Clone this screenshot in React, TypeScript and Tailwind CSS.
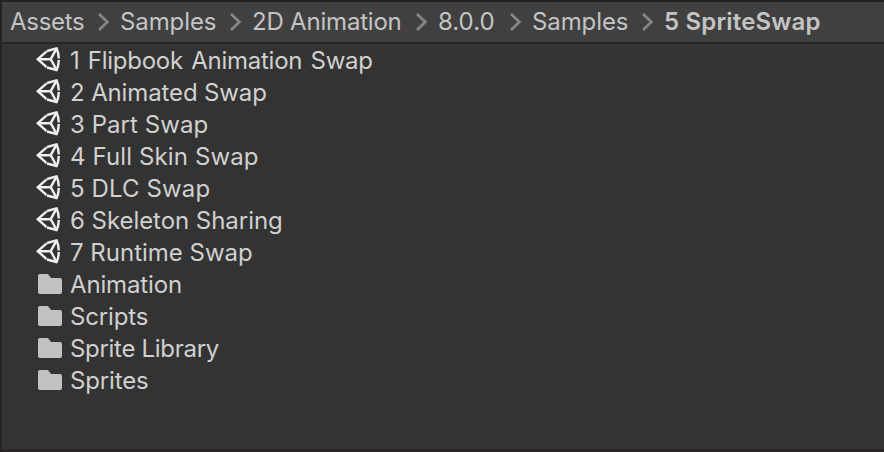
const crumbs = [
  { label: "Assets", width: "w-[110px]", tracking: "tracking-[-0.3px]" },
  { label: "Samples", width: "w-[132px]", tracking: "tracking-[-0.1px]" },
  { label: "2D Animation", width: "w-[186px]", tracking: "tracking-[-0.2px]" },
  { label: "8.0.0", width: "w-[94px]", tracking: "tracking-normal" },
  { label: "Samples", width: "w-[132px]", tracking: "tracking-[-0.1px]" },
];

const entries = [
  { kind: "scene", name: "1 Flipbook Animation Swap", tracking: "tracking-[-0.24px] [word-spacing:1.7px]" },
  { kind: "scene", name: "2 Animated Swap", tracking: "tracking-[-0.13px]" },
  { kind: "scene", name: "3 Part Swap", tracking: "tracking-[0.05px]" },
  { kind: "scene", name: "4 Full Skin Swap", tracking: "tracking-[0.12px]" },
  { kind: "scene", name: "5 DLC Swap", tracking: "tracking-[0.12px]" },
  { kind: "scene", name: "6 Skeleton Sharing", tracking: "tracking-[-0.05px]" },
  { kind: "scene", name: "7 Runtime Swap", tracking: "tracking-normal" },
  { kind: "folder", name: "Animation", tracking: "tracking-[-0.15px]" },
  { kind: "folder", name: "Scripts", tracking: "tracking-[-0.15px]" },
  { kind: "folder", name: "Sprite Library", tracking: "tracking-[-0.3px]" },
  { kind: "folder", name: "Sprites", tracking: "tracking-[-0.15px]" },
];

function Chevron() {
  return (
    <svg className="mr-[10px] h-[20px] w-[12px] shrink-0" viewBox="0 0 12 20" fill="none" stroke="#858585" strokeWidth="2.8">
      <path d="M1 2 9.3 10 1 18" />
    </svg>
  );
}

function SceneIcon() {
  return (
    <svg className="h-8 w-[28px] shrink-0" viewBox="0 0 28 32" fill="none" stroke="#f0f0f0" strokeWidth="2.4">
      <path d="M11 7 20.6 4.4Q22.8 9 22.7 14.4M22.7 16Q22.8 21.5 20.6 26L11 23.5M10.6 7.4 1.8 15.2 10.6 23.1" />
      <path d="M1.8 15.2H14.7L20.6 4.4M14.7 15.2 20.6 26" />
    </svg>
  );
}

function FolderIcon() {
  return (
    <svg className="h-8 w-[28px] shrink-0" viewBox="0 0 28 32" fill="#c2c2c2">
      <path d="M2 8Q2 6 4 6H11Q12 6 12.8 7L15 10H24Q26 10 26 12V24Q26 26 24 26H4Q2 26 2 24Z" />
    </svg>
  );
}

export default function App() {
  return (
    <div className="flex h-[452px] w-[884px] flex-col overflow-hidden border-t-2 border-b-[3px] border-l-2 border-t-[#232323] border-b-[#2c2628] border-l-[#232323] bg-[#333333] font-['Inter',sans-serif] text-[24px] leading-8 font-[370] whitespace-nowrap text-[#d0d0d0]">
      <nav className="flex h-[42px] shrink-0 items-center border-b-2 border-[#252525] bg-[#404040] pl-2 text-[#c4c4c4]">
        {crumbs.map((crumb, i) => (
          <div key={i} className={`flex shrink-0 items-center justify-between ${crumb.width}`}>
            <span className={crumb.tracking}>{crumb.label}</span>
            <Chevron />
          </div>
        ))}
        <span className="font-semibold tracking-[0.17px]">5 SpriteSwap</span>
      </nav>
      <ul className="flex flex-col pl-[34px]">
        {entries.map((entry) => (
          <li key={entry.name} className="flex h-8 items-center gap-[6px]">
            {entry.kind === "scene" ? <SceneIcon /> : <FolderIcon />}
            <span className={`pt-0.5 ${entry.tracking}`}>{entry.name}</span>
          </li>
        ))}
      </ul>
    </div>
  );
}
